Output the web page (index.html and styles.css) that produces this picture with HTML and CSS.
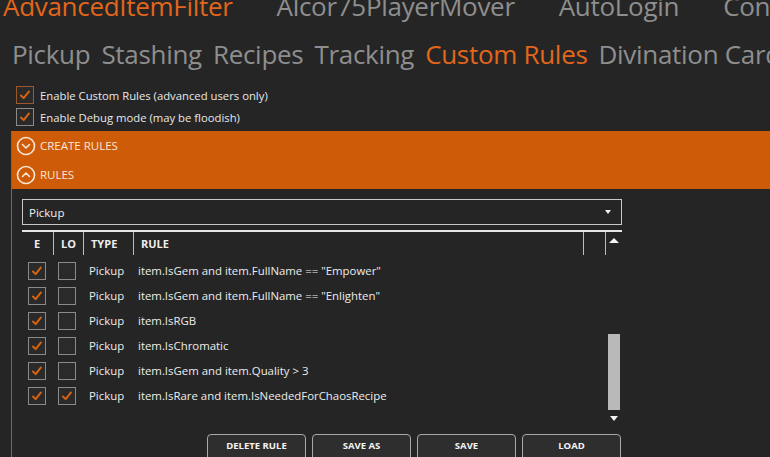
FILE: index.html
```html
<!DOCTYPE html>
<html>
<head>
<meta charset="utf-8">
<link rel="stylesheet" href="styles.css">
</head>
<body>
<div class="app">
  <div class="tabs-top">
    <span class="tab active">AdvancedItemFilter</span>
    <span class="tab">Alcor75PlayerMover</span>
    <span class="tab">AutoLogin</span>
    <span class="tab">ConfigCheck</span>
  </div>
  <div class="tabs-sub">
    <span class="tab">Pickup</span>
    <span class="tab">Stashing</span>
    <span class="tab">Recipes</span>
    <span class="tab">Tracking</span>
    <span class="tab active">Custom Rules</span>
    <span class="tab">Divination Cards</span>
  </div>
  <div class="options">
    <label class="opt"><span class="cb cb-hot"><svg viewBox="0 0 18 18"><path d="M4.5 9.5 L7.5 12.5 L13.5 5" /></svg></span>Enable Custom Rules (advanced users only)</label>
    <label class="opt"><span class="cb"><svg viewBox="0 0 18 18"><path d="M4.5 9.5 L7.5 12.5 L13.5 5" /></svg></span>Enable Debug mode (may be floodish)</label>
  </div>
  <div class="section">
    <div class="expander">
      <div class="exp-head">
        <svg class="exp-icon" viewBox="0 0 20 20"><circle cx="10" cy="10" r="8.5"/><path d="M6.5 8.5 L10 12 L13.5 8.5"/></svg>
        <span>CREATE RULES</span>
      </div>
      <div class="exp-head">
        <svg class="exp-icon" viewBox="0 0 20 20"><circle cx="10" cy="10" r="8.5"/><path d="M6.5 11.5 L10 8 L13.5 11.5"/></svg>
        <span>RULES</span>
      </div>
    </div>
    <div class="rules-body">
      <div class="combo">
        <span>Pickup</span>
        <span class="combo-arrow"></span>
      </div>
      <div class="grid">
        <div class="grid-main">
          <div class="grid-head">
            <div class="col c-e">E</div>
            <div class="col c-lo">LO</div>
            <div class="col c-type">TYPE</div>
            <div class="col c-rule">RULE</div>
            <div class="col c-pad"></div>
          </div>
          <div class="row">
            <div class="col c-e"><span class="cb"><svg viewBox="0 0 18 18"><path d="M4.5 9.5 L7.5 12.5 L13.5 5" /></svg></span></div>
            <div class="col c-lo"><span class="cb"></span></div>
            <div class="col c-type">Pickup</div>
            <div class="col c-rule">item.IsGem and item.FullName == "Empower"</div>
          </div>
          <div class="row">
            <div class="col c-e"><span class="cb"><svg viewBox="0 0 18 18"><path d="M4.5 9.5 L7.5 12.5 L13.5 5" /></svg></span></div>
            <div class="col c-lo"><span class="cb"></span></div>
            <div class="col c-type">Pickup</div>
            <div class="col c-rule">item.IsGem and item.FullName == "Enlighten"</div>
          </div>
          <div class="row">
            <div class="col c-e"><span class="cb"><svg viewBox="0 0 18 18"><path d="M4.5 9.5 L7.5 12.5 L13.5 5" /></svg></span></div>
            <div class="col c-lo"><span class="cb"></span></div>
            <div class="col c-type">Pickup</div>
            <div class="col c-rule">item.IsRGB</div>
          </div>
          <div class="row">
            <div class="col c-e"><span class="cb"><svg viewBox="0 0 18 18"><path d="M4.5 9.5 L7.5 12.5 L13.5 5" /></svg></span></div>
            <div class="col c-lo"><span class="cb"></span></div>
            <div class="col c-type">Pickup</div>
            <div class="col c-rule">item.IsChromatic</div>
          </div>
          <div class="row">
            <div class="col c-e"><span class="cb"><svg viewBox="0 0 18 18"><path d="M4.5 9.5 L7.5 12.5 L13.5 5" /></svg></span></div>
            <div class="col c-lo"><span class="cb"></span></div>
            <div class="col c-type">Pickup</div>
            <div class="col c-rule">item.IsGem and item.Quality &gt; 3</div>
          </div>
          <div class="row">
            <div class="col c-e"><span class="cb"><svg viewBox="0 0 18 18"><path d="M4.5 9.5 L7.5 12.5 L13.5 5" /></svg></span></div>
            <div class="col c-lo"><span class="cb"><svg viewBox="0 0 18 18"><path d="M4.5 9.5 L7.5 12.5 L13.5 5" /></svg></span></div>
            <div class="col c-type">Pickup</div>
            <div class="col c-rule">item.IsRare and item.IsNeededForChaosRecipe</div>
          </div>
        </div>
        <div class="vscroll">
          <span class="arrow-up"></span>
          <div class="track"><div class="thumb"></div></div>
          <span class="arrow-down"></span>
        </div>
      </div>
      <div class="buttons">
        <button class="btn">DELETE RULE</button>
        <button class="btn">SAVE AS</button>
        <button class="btn">SAVE</button>
        <button class="btn">LOAD</button>
      </div>
    </div>
  </div>
</div>
</body>
</html>
```

FILE: styles.css
```css
* { box-sizing: border-box; }
html, body {
  margin: 0;
  padding: 0;
  background: #252525;
  width: 770px;
  height: 457px;
  overflow: hidden;
}
body {
  font-family: "Open Sans", "Noto Sans", "Liberation Sans", sans-serif;
  color: #e6e6e6;
}
.app { width: 770px; overflow: hidden; }

.tabs-top {
  display: flex;
  white-space: nowrap;
  gap: 44px;
  padding-left: 3px;
  height: 26px;
  margin-top: -11px;
  font-size: 26px;
  line-height: 34px;
  color: #8e8e8e;
  letter-spacing: -0.3px;
}
.tabs-sub {
  display: flex;
  white-space: nowrap;
  gap: 11px;
  padding-left: 12px;
  margin-top: 21px;
  height: 40px;
  font-size: 26px;
  line-height: 36px;
  color: #8e8e8e;
  letter-spacing: -0.3px;
}
.tab.active { color: #e2661c; }

.options {
  display: flex;
  flex-direction: column;
  gap: 4px;
  padding-left: 16px;
  margin-top: 10px;
}
.opt {
  display: flex;
  align-items: center;
  gap: 6px;
  font-size: 11.3px;
  height: 18px;
  color: #e8e8e8;
}

.cb {
  width: 18px;
  height: 18px;
  border: 1px solid #8a8a8a;
  background: #2a2a2a;
  display: inline-flex;
  align-items: center;
  justify-content: center;
  flex: none;
}
.cb.cb-hot { border-color: #9a5a2e; }
.cb svg {
  width: 16px;
  height: 16px;
  fill: none;
  stroke: #d9640f;
  stroke-width: 2.2;
  stroke-linecap: round;
  stroke-linejoin: round;
}

.section {
  margin-left: 11px;
  margin-top: 5px;
  border-left: 1px solid #b8560d;
  height: 330px;
}
.expander {
  background: #cd5b07;
  display: flex;
  flex-direction: column;
}
.exp-head {
  height: 29px;
  display: flex;
  align-items: center;
  gap: 4px;
  padding-left: 4px;
  font-size: 11.5px;
  color: #fbe6d6;
}
.exp-icon {
  width: 20px;
  height: 20px;
  fill: none;
  stroke: #fbe6d6;
  stroke-width: 1.6;
  stroke-linecap: round;
  stroke-linejoin: round;
}

.rules-body {
  padding-left: 10px;
  padding-top: 10px;
  width: 611px;
}
.combo {
  width: 600px;
  height: 26px;
  border: 1px solid #c9c9c9;
  display: flex;
  align-items: center;
  justify-content: space-between;
  padding: 0 10px 0 6px;
  font-size: 11.5px;
  color: #f0f0f0;
}
.combo-arrow {
  width: 0;
  height: 0;
  border-left: 3.5px solid transparent;
  border-right: 3.5px solid transparent;
  border-top: 4px solid #f0f0f0;
}

.grid {
  margin-top: 5px;
  width: 600px;
  border-top: 2px solid #e6e6e6;
  display: flex;
}
.grid-main { flex: 1; }
.grid-head {
  display: flex;
  height: 23px;
  font-weight: 700;
  font-size: 11px;
  color: #eeeeee;
  align-items: stretch;
}
.grid-head .col {
  display: flex;
  align-items: center;
  border-right: 1px solid #bdbdbd;
  padding-left: 7px;
}
.grid-head .c-e { padding-left: 12px; }
.grid-head .c-rule { padding-left: 7px; }
.grid-head .c-pad { border-right: 1px solid #bdbdbd; }

.c-e { width: 32px; }
.c-lo { width: 30px; }
.c-type { width: 50px; }
.c-rule { width: 450px; }
.c-pad { width: 22px; }

.row {
  display: flex;
  height: 25px;
  align-items: center;
  font-size: 11.4px;
  color: #ececec;
}
.grid-head + .row { margin-top: 3px; }
.row .c-e { padding-left: 6px; display: flex; }
.row .c-lo { padding-left: 4px; display: flex; }
.row .c-type { padding-left: 5px; }
.row .c-rule { padding-left: 4px; }

.vscroll {
  width: 16px;
  display: flex;
  flex-direction: column;
  align-items: center;
  height: 197px;
}
.arrow-up {
  margin-top: 6px;
  width: 0;
  height: 0;
  border-left: 5px solid transparent;
  border-right: 5px solid transparent;
  border-bottom: 5px solid #f4f4f4;
}
.track {
  flex: 1;
  width: 12px;
  display: flex;
  flex-direction: column;
  justify-content: flex-end;
  padding-bottom: 2px;
}
.thumb {
  height: 76px;
  background: #b9b9b9;
}
.arrow-down {
  margin-top: 4px;
  margin-bottom: 8px;
  width: 0;
  height: 0;
  border-left: 4.5px solid transparent;
  border-right: 4.5px solid transparent;
  border-top: 5px solid #f4f4f4;
}

.buttons {
  width: 600px;
  display: flex;
  justify-content: flex-end;
  gap: 6px;
  margin-top: 5px;
  padding-right: 1px;
}
.btn {
  width: 99px;
  height: 28px;
  border: 1px solid #a9a9a9;
  border-radius: 4px 4px 0 0;
  background: #2e2e2e;
  color: #f4f4f4;
  font-family: "Open Sans", "Noto Sans", sans-serif;
  font-weight: 700;
  font-size: 9.5px;
  padding: 0 0 6px;
}
```
